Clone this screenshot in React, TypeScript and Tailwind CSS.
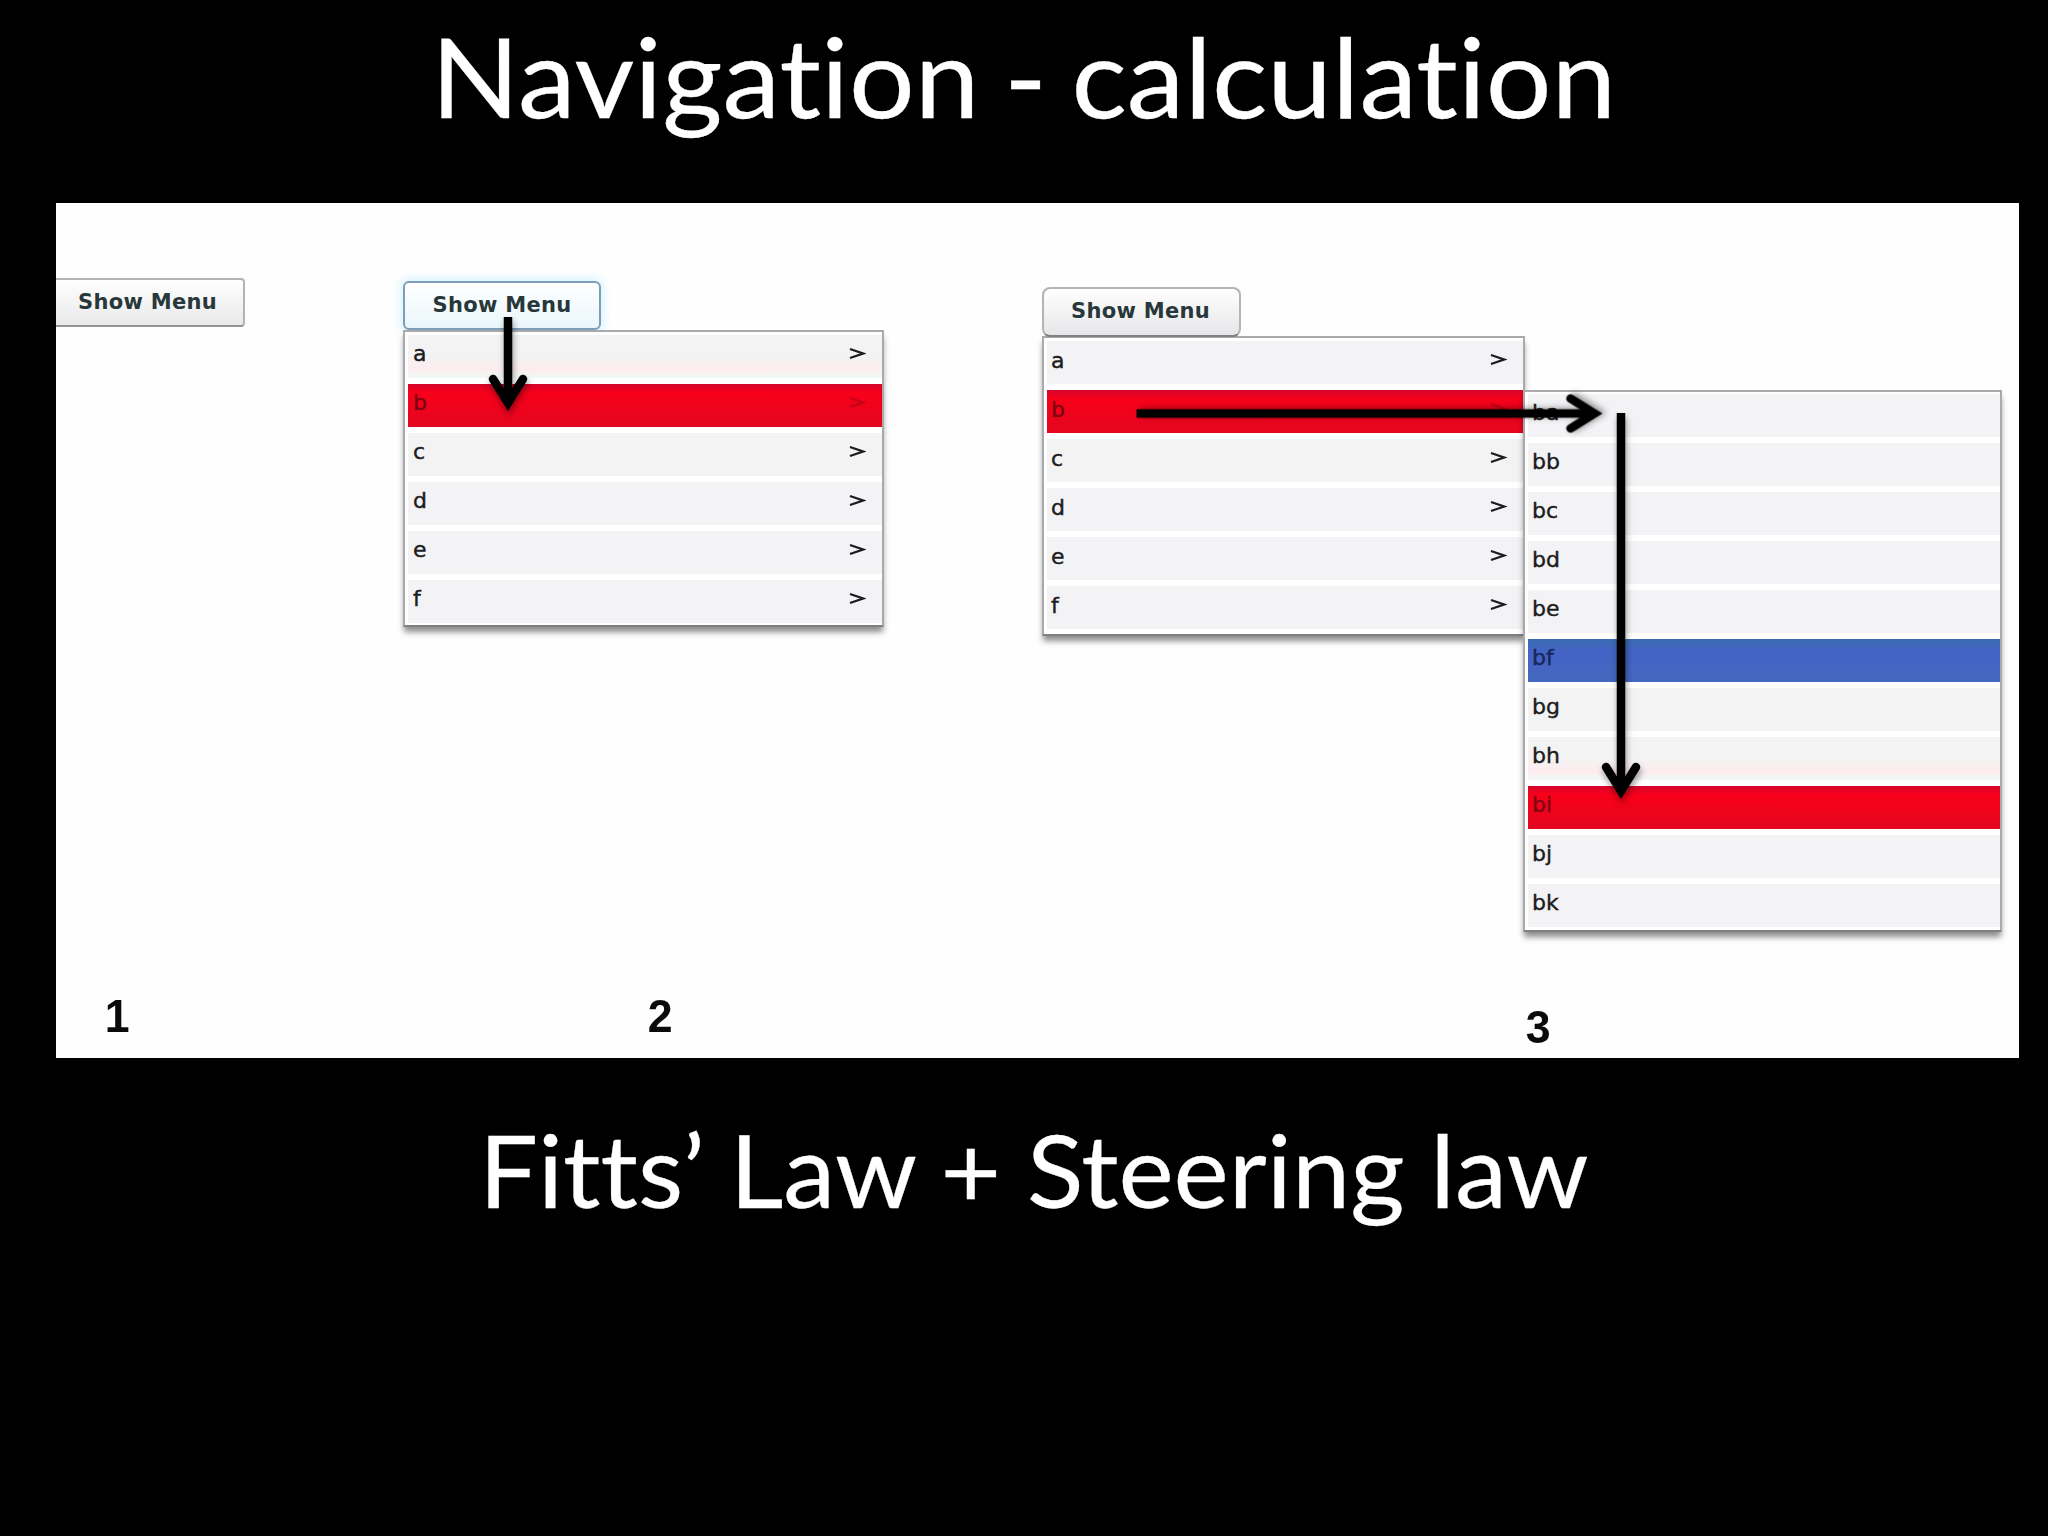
import React from 'react';
import clsx from 'clsx';

type Tone = 'plain' | 'red' | 'blue' | 'warm' | 'mint';

interface MenuItem {
  label: string;
  tone?: Tone;
}

interface MenuProps {
  items: MenuItem[];
  arrows?: boolean;
  className?: string;
  rowClassName?: string;
}

const toneClasses: Record<Tone, string> = {
  plain: 'bg-[#f3f2f5] text-[#1c1c20]',
  red: 'bg-linear-to-b from-[#d3062a] via-[#f80019] via-20% to-[#e4061f] text-[#7d0612]',
  blue: 'bg-linear-to-b from-[#3a6cb2] via-[#4463c6] via-30% to-[#4468bd] text-[#16275c]',
  warm: 'bg-[#f3f3f3] text-[#1c1c20]',
  mint: 'bg-linear-to-b from-[#f2f3f2] from-50% via-[#fdecef] via-80% to-[#effaf5] text-[#1c1c20]',
};

const firstLevel: MenuItem[] = [
  { label: 'a' },
  { label: 'b', tone: 'red' },
  { label: 'c', tone: 'warm' },
  { label: 'd' },
  { label: 'e' },
  { label: 'f' },
];

const firstLevelHover: MenuItem[] = firstLevel.map((item) =>
  item.label === 'a' ? { ...item, tone: 'mint' as Tone } : item
);

const secondLevel: MenuItem[] = [
  { label: 'ba' },
  { label: 'bb' },
  { label: 'bc' },
  { label: 'bd' },
  { label: 'be' },
  { label: 'bf', tone: 'blue' },
  { label: 'bg', tone: 'warm' },
  { label: 'bh', tone: 'mint' },
  { label: 'bi', tone: 'red' },
  { label: 'bj' },
  { label: 'bk' },
];

const Menu: React.FC<MenuProps> = ({ items, arrows = false, className, rowClassName }) => (
  <ul
    className={clsx(
      'flex flex-col gap-[6px] border-2 border-[#aaaaad] border-b-[#808083] bg-white pl-[3px] shadow-[0_6px_6px_-1px_rgba(0,0,0,0.45)]',
      className
    )}
  >
    {items.map(({ label, tone = 'plain' }) => (
      <li
        key={label}
        className={clsx(
          'flex h-[43px] justify-between pr-[16px] font-["DejaVu_Sans",sans-serif] text-[22px] [-webkit-text-stroke:0.4px_currentColor]',
          toneClasses[tone],
          rowClassName
        )}
      >
        <span>{label}</span>
        {arrows && (
          <svg
            className={clsx('mt-[12px] h-[13px] w-[17px]', tone === 'red' && 'opacity-40')}
            viewBox="0 0 17 13"
            fill="none"
            stroke="currentColor"
            strokeWidth="2.2"
          >
            <path d="M1 2 L14 6.5 L1 11" />
          </svg>
        )}
      </li>
    ))}
  </ul>
);

const ShowMenuButton: React.FC<{ className?: string }> = ({ className }) => (
  <button
    className={clsx(
      'flex items-center justify-center border-2 font-["DejaVu_Sans",sans-serif] text-[21px] font-bold tracking-[0.3px] whitespace-nowrap text-[#28383a]',
      className
    )}
  >
    <span>Show Menu</span>
  </button>
);

// Arrow with rounded barbs, pointing down; length is measured from tail to tip
const Arrow: React.FC<{ length: number; className?: string }> = ({ length, className }) => (
  <svg
    className={clsx('absolute overflow-visible drop-shadow-[1px_4px_3px_rgba(0,0,0,0.4)]', className)}
    width="40"
    height={length}
    viewBox={`0 0 40 ${length}`}
    fill="none"
    stroke="#000"
    strokeWidth="8.5"
  >
    <path d={`M20 0 V${length - 9}`} />
    <path
      d={`M5 ${length - 33} L20 ${length - 9} L35 ${length - 33}`}
      strokeLinecap="round"
      strokeMiterlimit="10"
    />
  </svg>
);

const StepNumber: React.FC<{ children: React.ReactNode; className?: string }> = ({ children, className }) => (
  <p
    className={clsx(
      'absolute scale-x-95 font-["Liberation_Sans",Arial,sans-serif] text-[47px] leading-none font-bold text-[#0a0a0a]',
      className
    )}
  >
    {children}
  </p>
);

const App: React.FC = () => {
  return (
    <main className="flex h-[1536px] w-[2048px] flex-col overflow-hidden bg-black font-[Lato,sans-serif] text-white [font-variant-ligatures:none]">
      <h1 className="flex h-[203px] shrink-0 justify-center pt-[9px] text-[110px] leading-[132px] whitespace-nowrap">
        <span className="scale-x-[1.055] [word-spacing:-5px] [-webkit-text-stroke:0.3px_white]">
          Navigation - calculation
        </span>
      </h1>

      <section className="relative ml-[56px] flex h-[855px] w-[1963px] shrink-0 bg-[#fefefe]">
        <div className="w-[347px] pt-[75px]">
          <ShowMenuButton className="h-[49px] w-[189px] rounded-r-[4px] border-l-0 border-[#b4b4b6] border-b-[#939396] bg-linear-to-b from-white to-[#e9e9eb] pr-[4px]" />
          <StepNumber className="top-[789px] left-[48px]">1</StepNumber>
        </div>

        <div className="w-[639px] pt-[78px]">
          <ShowMenuButton className="h-[49px] w-[198px] rounded-[6px] border-[#7d9db8] bg-linear-to-b from-white to-[#eaf6fc] shadow-[0_0_10px_2px_rgba(180,235,255,0.6)]" />
          <Menu
            items={firstLevelHover}
            arrows
            className="w-[481px] pt-[3px] pb-[2px]"
            rowClassName="pl-[5px] leading-[37px]"
          />
          <StepNumber className="top-[789px] left-[591px]">2</StepNumber>
        </div>

        <div className="w-[977px] pt-[84px]">
          <ShowMenuButton className="relative z-10 h-[50px] w-[199px] rounded-[8px] border-[#b4b4b6] border-b-[#808083] bg-linear-to-b from-white to-[#e6e6e8] pr-[2px]" />
          <div className="-mt-px flex items-start">
            <Menu
              items={firstLevel}
              arrows
              className="w-[483px] pt-[3px] pb-[5px]"
              rowClassName="pl-[4px] leading-[40px]"
            />
            <Menu
              items={secondLevel}
              className="-ml-[2px] mt-[54px] w-[479px] pt-[2px] pb-[3px]"
              rowClassName="pl-[4px] leading-[37px]"
            />
          </div>
          <StepNumber className="top-[800px] left-[1469px]">3</StepNumber>
        </div>

        <Arrow length={95} className="top-[114px] left-[432px]" />
        <Arrow length={467} className="top-[-23px] left-[1294px] -rotate-90" />
        <Arrow length={387} className="top-[210px] left-[1545px]" />
      </section>

      <h2 className="flex justify-center pt-[51px] pl-[20px] text-[100px] leading-[120px] whitespace-nowrap">
        <span className="scale-x-[1.045] [word-spacing:-1px] [-webkit-text-stroke:0.3px_white]">
          Fitts’ Law + Steering law
        </span>
      </h2>
    </main>
  );
};

export default App;
